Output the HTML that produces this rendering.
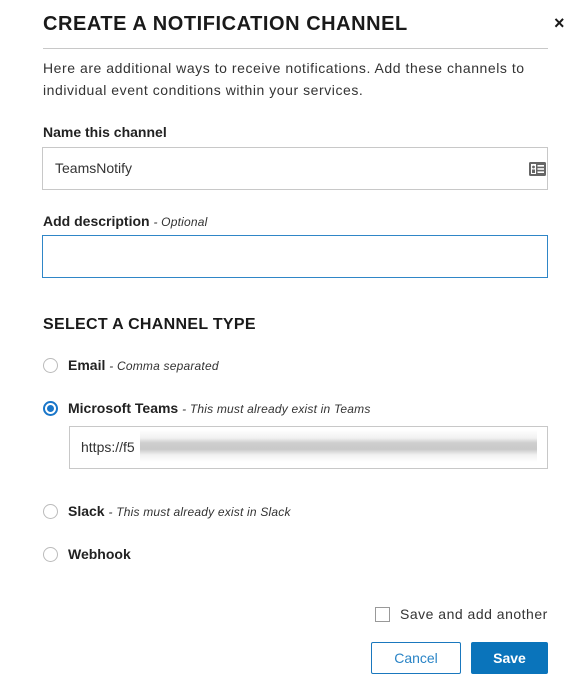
<!DOCTYPE html>
<html><head><style>
body{margin:0;width:580px;height:687px;background:#fff;font-family:"Liberation Sans",sans-serif;color:#1a1a1a;position:relative;overflow:hidden}
.a{position:absolute;white-space:nowrap}
.h{font-weight:bold;font-size:20px;letter-spacing:0.55px}
.lbl{font-size:14px;font-weight:bold;color:#222}
.opt{font-style:italic;font-weight:normal;font-size:12px;color:#333;letter-spacing:0.2px}
.box{position:absolute;border:1px solid #c8c8c8;box-sizing:border-box;background:#fff}
.radio{position:absolute;width:15px;height:15px;border:1px solid #bbb;border-radius:50%;box-sizing:border-box;background:#fff}
</style></head><body>
<div class="a h" style="left:43px;top:13px">CREATE A NOTIFICATION CHANNEL</div>
<div class="a" style="left:554px;top:13px;font-size:18px;font-weight:bold">×</div>
<div class="a" style="left:43px;top:48px;width:505px;height:1px;background:#c8c8c8"></div>
<div class="a" style="left:43px;top:57px;font-size:14px;line-height:22px;color:#333;letter-spacing:0.55px">Here are additional ways to receive notifications. Add these channels to<br>individual event conditions within your services.</div>
<div class="a lbl" style="left:43px;top:124px">Name this channel</div>
<div class="box" style="left:42px;top:147px;width:506px;height:43px"></div>
<div class="a" style="left:55px;top:160px;font-size:14px;color:#333">TeamsNotify</div>
<svg class="a" style="left:529px;top:162px" width="17" height="14" viewBox="0 0 17 14"><rect x="0" y="0" width="17" height="14" rx="1.5" fill="#666"/><rect x="2" y="2" width="5" height="10" fill="#fff"/><circle cx="4.5" cy="5" r="1.4" fill="#666"/><rect x="3" y="7.5" width="3" height="3.5" fill="#666"/><rect x="8.5" y="3" width="6.5" height="1.6" fill="#fff"/><rect x="8.5" y="6.2" width="6.5" height="1.6" fill="#fff"/><rect x="8.5" y="9.4" width="6.5" height="1.6" fill="#fff"/></svg>
<div class="a lbl" style="left:43px;top:213px">Add description <span class="opt">- Optional</span></div>
<div class="box" style="left:42px;top:235px;width:506px;height:43px;border-color:#2f86c7"></div>
<div class="a" style="left:43px;top:316px;font-size:16px;font-weight:bold;letter-spacing:0.3px">SELECT A CHANNEL TYPE</div>
<div class="radio" style="left:43px;top:358px"></div>
<div class="a lbl" style="left:68px;top:357px">Email <span class="opt">- Comma separated</span></div>
<div class="radio" style="left:43px;top:401px;border:2px solid #1976c9"><div style="position:absolute;left:2px;top:2px;width:7px;height:7px;border-radius:50%;background:#1976c9"></div></div>
<div class="a lbl" style="left:68px;top:400px">Microsoft Teams <span class="opt">- This must already exist in Teams</span></div>
<div class="box" style="left:69px;top:426px;width:479px;height:43px"></div>
<div class="a" style="left:81px;top:439px;font-size:14px;color:#333">https://f5</div>
<div class="a" style="left:140px;top:430px;width:397px;height:32px;background:linear-gradient(#fff,#f1f1f1 25%,#cfcfcf 40%,#c9c9c9 60%,#f1f1f1 78%,#fff)"></div>
<div class="radio" style="left:43px;top:504px"></div>
<div class="a lbl" style="left:68px;top:503px">Slack <span class="opt">- This must already exist in Slack</span></div>
<div class="radio" style="left:43px;top:547px"></div>
<div class="a lbl" style="left:68px;top:546px">Webhook</div>
<div class="a" style="left:375px;top:607px;width:15px;height:15px;border:1px solid #999;box-sizing:border-box"></div>
<div class="a" style="left:400px;top:606px;font-size:14px;color:#333;letter-spacing:0.5px">Save and add another</div>
<div class="a" style="left:371px;top:642px;width:90px;height:32px;border:1px solid #1a78be;box-sizing:border-box;border-radius:2px;color:#2a84c6;font-size:14px;text-align:center;line-height:30px">Cancel</div>
<div class="a" style="left:471px;top:642px;width:77px;height:32px;background:#0a74bb;border-radius:2px;color:#fff;font-size:14px;font-weight:bold;text-align:center;line-height:32px">Save</div>
</body></html>
